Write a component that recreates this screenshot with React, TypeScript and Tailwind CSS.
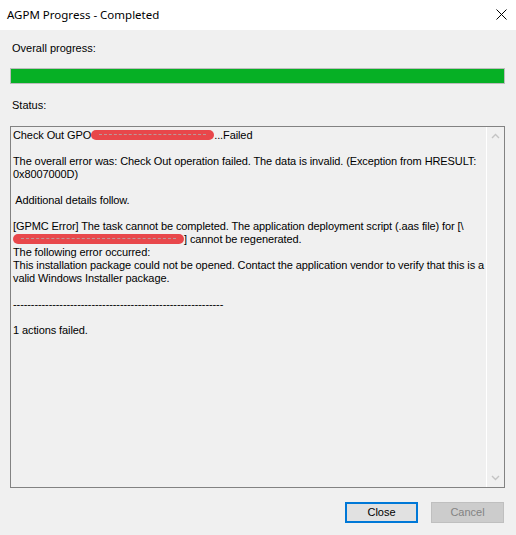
import React from "react";

function Redact({ w }: { w: number }) {
  return (
    <span
      className="relative inline-block h-[10px] rounded-full bg-[#e8474b] align-[-1px]"
      style={{ width: w }}
    >
      <span className="absolute left-[8px] right-[8px] top-[4px] border-t border-dashed border-[#b89a9a]" />
    </span>
  );
}

export default function App() {
  const L = "h-[13px] leading-[13px] whitespace-pre";
  return (
    <div className="w-[516px] h-[535px] bg-[#f0f0f0] flex flex-col font-['Liberation_Sans',Arial,sans-serif] text-[11px] text-black overflow-hidden">
      <div className="h-[30px] bg-white flex items-center justify-between pl-[7px] pr-[9px] pb-[1px] shrink-0">
        <span className="font-['Noto_Sans',sans-serif] text-[11.5px] text-black leading-none">
          AGPM Progress - Completed
        </span>
        <svg width="11" height="11" viewBox="0 0 11 11" className="block">
          <path d="M0.5 0.5 L10.5 10.5 M10.5 0.5 L0.5 10.5" stroke="#000" strokeWidth="1" />
        </svg>
      </div>
      <div className="flex flex-col pl-[10px] pr-[11px]">
        <div className={`${L} mt-[12px] pl-[2px]`}>Overall progress:</div>
        <div className="mt-[13px] h-[16px] border border-[#bcbcbc] bg-[#e6e6e6]">
          <div className="h-full bg-[#06b025]" style={{ width: "100%" }} />
        </div>
        <div className={`${L} mt-[15px] pl-[2px]`}>Status:</div>
        <div className="mt-[14px] h-[362px] border border-[#828282] flex">
          <div className="flex-1 pl-[2px] pt-[2px] tracking-[-0.1px]">
            <div className={L}>
              Check Out GPO<Redact w={123} />...Failed
            </div>
            <div className={L}> </div>
            <div className={L}>
              The overall error was: Check Out operation failed. The data is invalid. (Exception from HRESULT:
            </div>
            <div className={L}>0x8007000D)</div>
            <div className={L}> </div>
            <div className={L}> Additional details follow.</div>
            <div className={L}> </div>
            <div className={L}>
              [GPMC Error] The task cannot be completed. The application deployment script (.aas file) for [\
            </div>
            <div className={L}>
              <Redact w={171} />] cannot be regenerated.
            </div>
            <div className={L}>The following error occurred:</div>
            <div className={L}>
              This installation package could not be opened. Contact the application vendor to verify that this is a
            </div>
            <div className={L}>valid Windows Installer package.</div>
            <div className={L}> </div>
            <div className={L}>-----------------------------------------------------------</div>
            <div className={L}> </div>
            <div className={L}>1 actions failed.</div>
          </div>
          <div className="w-[18px] border-l border-white flex flex-col justify-between items-center py-[6px]">
            <svg width="9" height="6" viewBox="0 0 9 6">
              <path d="M1 5 L4.5 1.5 L8 5" fill="none" stroke="#c4c4c4" strokeWidth="1.4" />
            </svg>
            <svg width="9" height="6" viewBox="0 0 9 6">
              <path d="M1 1 L4.5 4.5 L8 1" fill="none" stroke="#c4c4c4" strokeWidth="1.4" />
            </svg>
          </div>
        </div>
        <div className="mt-[14px] flex justify-end gap-[13px] pr-[1px]">
          <button className="w-[73px] h-[21px] border-2 border-[#0078d7] bg-[#e1e1e1] text-[11px] leading-none text-black flex items-center justify-center">
            Close
          </button>
          <button className="w-[73px] h-[21px] border border-[#bfbfbf] bg-[#cccccc] text-[11px] leading-none text-[#838383] flex items-center justify-center">
            Cancel
          </button>
        </div>
      </div>
    </div>
  );
}
